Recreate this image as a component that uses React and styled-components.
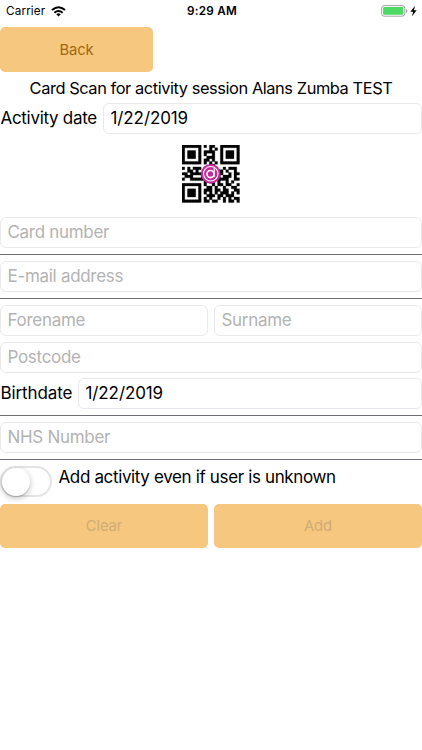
import React from "react";
import styled, { createGlobalStyle } from "styled-components";

const GlobalStyle = createGlobalStyle`
  * { box-sizing: border-box; }
  body {
    margin: 0;
    background: #fff;
    color: #000;
    font-family: Inter, "Liberation Sans", sans-serif;
  }
`;

const Screen = styled.main`
  width: 422px;
  height: 750px;
  overflow: hidden;
  display: flex;
  flex-direction: column;
`;

const StatusBar = styled.header`
  height: 27px;
  flex: none;
  display: grid;
  grid-template-columns: 1fr auto 1fr;
  padding: 0 4px 5px 6px;
  align-items: center;
  font-size: 11.7px;
`;

const Network = styled.div`
  display: flex;
  align-items: center;
  gap: 6px;
  letter-spacing: 0.15px;
`;

const Clock = styled.div`
  font-weight: 600;
  font-size: 11.7px;
  letter-spacing: 0.25px;
`;

const Power = styled.div`
  display: flex;
  justify-content: flex-end;
`;

const Button = styled.button`
  width: ${(p) => p.$width};
  height: 44.5px;
  flex: none;
  padding: 1px 0 0;
  border: 0;
  border-radius: 5px;
  background: #f5c77f;
  color: ${(p) => (p.disabled ? "#d0ac76" : "#a4670b")};
  font: 400 14.8px Inter, sans-serif;
  letter-spacing: -0.1px;
`;

const Title = styled.h1`
  margin: 0;
  height: 31.5px;
  flex: none;
  font-size: 16.4px;
  font-weight: 400;
  line-height: 32.5px;
  text-align: center;
  white-space: nowrap;
  letter-spacing: -0.43px;
`;

const Row = styled.div`
  display: flex;
  flex: none;
  gap: 6px;
  height: 31px;
  margin-top: ${(p) => p.$top || "0"};
`;

const Label = styled.label`
  width: ${(p) => p.$width};
  flex: none;
  padding-left: 0.5px;
  font-size: 17px;
  line-height: 31px;
  white-space: nowrap;
  letter-spacing: ${(p) => p.$tracking || "0"};
`;

const Field = styled.input`
  flex: 1;
  min-width: 0;
  height: 31px;
  padding: 0 7px 1px 6.5px;
  border: 1px solid #e9e9e9;
  border-radius: 6px;
  background: #fff;
  color: #000;
  font: 400 17px Inter, sans-serif;
  letter-spacing: -0.1px;
  outline: none;
  &::placeholder { color: #b3b3b3; opacity: 1; letter-spacing: -0.3px; }
`;

const Divider = styled.hr`
  width: 100%;
  height: 1px;
  flex: none;
  margin: 6px 0;
  border: 0;
  background: #6f6e79;
`;

const CodeFrame = styled.div`
  display: flex;
  justify-content: center;
  height: 83px;
  flex: none;
  padding-top: 11px;
`;

const Switch = styled.button`
  width: 52px;
  height: 31px;
  flex: none;
  padding: 0;
  border: 2px solid #e4e4e4;
  border-radius: 16px;
  background: #fff;
`;

const Knob = styled.span`
  display: block;
  width: 28px;
  height: 28px;
  border-radius: 50%;
  background: #fff;
  box-shadow: 0 2px 6px rgba(0, 0, 0, 0.25), 0 1px 1px rgba(0, 0, 0, 0.15);
`;

const SwitchLabel = styled.span`
  padding-left: 0.5px;
  font-size: 17px;
  line-height: 22px;
  white-space: nowrap;
  letter-spacing: -0.36px;
`;

const modules = [
  "#######.#.##..#######",
  "#.....#...#.#.#.....#",
  "#.###.#.####..#.###.#",
  "#.###.#.#..#..#.###.#",
  "#.###.#..###..#.###.#",
  "#.....#.##.#..#.....#",
  "#######.#.#.#.#######",
  "..........##.........",
  "#.#.###.##.##..#.###.",
  "..##.#..####.##.#..#.",
  "##.########..##..#.##",
  ".###...#.##.##.###.#.",
  "#..#####.##.#####..##",
  "........#.##.#..#.#..",
  "#######.#..#.##.##..#",
  "#.....#..##.#..#..##.",
  "#.###.#.###.##.##..##",
  "#.###.#.#.#.#.###.#.#",
  "#.###.#..###.##.###..",
  "#.....#.#.#..#.#.#.##",
  "#######.##.##..#.##.#",
];

function QrCode() {
  const d = modules
    .flatMap((row, y) => [...row].map((c, x) => (c === "#" ? `M${x} ${y}h1v1h-1z` : "")))
    .join("");
  return (
    <svg width="57.5" height="57.5" viewBox="0 0 21 21" aria-label="QR code">
      <path d={d} fill="#050505" stroke="#050505" strokeWidth=".1" />
      <circle cx="10.5" cy="10.5" r="3.6" fill="#c32b9b" />
      <g fill="none" stroke="#fff">
        <circle cx="10.5" cy="10.5" r="2.65" strokeWidth=".38" />
        <circle cx="10.4" cy="10.6" r="1.3" strokeWidth=".6" />
        <path d="M11.75 8.5v3.2" strokeWidth=".45" />
      </g>
    </svg>
  );
}

function WifiIcon() {
  return (
    <svg width="15" height="11" viewBox="0 0 15 11" fill="none" stroke="#000" strokeWidth="2">
      <path d="M1 4.1Q7.5-1.6 14 4.1M3.4 6.7Q7.5 3.2 11.6 6.7" />
      <path d="M5.2 8.2Q7.5 6.4 9.8 8.2L7.5 10.6Z" fill="#000" stroke="none" />
    </svg>
  );
}

function BatteryIcon() {
  return (
    <svg width="37" height="12" viewBox="0 0 37 12">
      <rect x=".6" y=".6" width="23.2" height="10.6" rx="2.6" fill="#fff" stroke="#a4a4a4" />
      <rect x="2.1" y="2.1" width="20.2" height="7.6" rx="1.2" fill="#4cd964" />
      <path d="M25 4q1.4.4 1.4 2T25 8z" fill="#a4a4a4" />
      <path d="M34.1.8 29.3 6.7h2.8l-1.1 4.5 4.7-6h-2.8z" fill="#000" />
    </svg>
  );
}

export default function App() {
  return (
    <>
      <GlobalStyle />
      <Screen>
        <StatusBar>
          <Network>Carrier <WifiIcon /></Network>
          <Clock>9:29 AM</Clock>
          <Power><BatteryIcon /></Power>
        </StatusBar>
        <Button $width="153px">Back</Button>
        <Title>Card Scan for activity session Alans Zumba TEST</Title>
        <Row>
          <Label $width="97px" $tracking="-0.3px" htmlFor="activity-date">Activity date</Label>
          <Field id="activity-date" defaultValue="1/22/2019" />
        </Row>
        <CodeFrame><QrCode /></CodeFrame>
        <Row><Field placeholder="Card number" /></Row>
        <Divider />
        <Row><Field placeholder="E-mail address" /></Row>
        <Divider />
        <Row>
          <Field placeholder="Forename" />
          <Field placeholder="Surname" />
        </Row>
        <Row $top="5.5px"><Field placeholder="Postcode" /></Row>
        <Row $top="5.5px">
          <Label $width="72px" $tracking="-0.12px" htmlFor="birthdate">Birthdate</Label>
          <Field id="birthdate" defaultValue="1/22/2019" />
        </Row>
        <Divider />
        <Row><Field placeholder="NHS Number" /></Row>
        <Divider />
        <Row>
          <Switch role="switch" aria-checked="false"><Knob /></Switch>
          <SwitchLabel>Add activity even if user is unknown</SwitchLabel>
        </Row>
        <Row $top="6.5px">
          <Button $width="208px" disabled>Clear</Button>
          <Button $width="208px" disabled>Add</Button>
        </Row>
      </Screen>
    </>
  );
}
